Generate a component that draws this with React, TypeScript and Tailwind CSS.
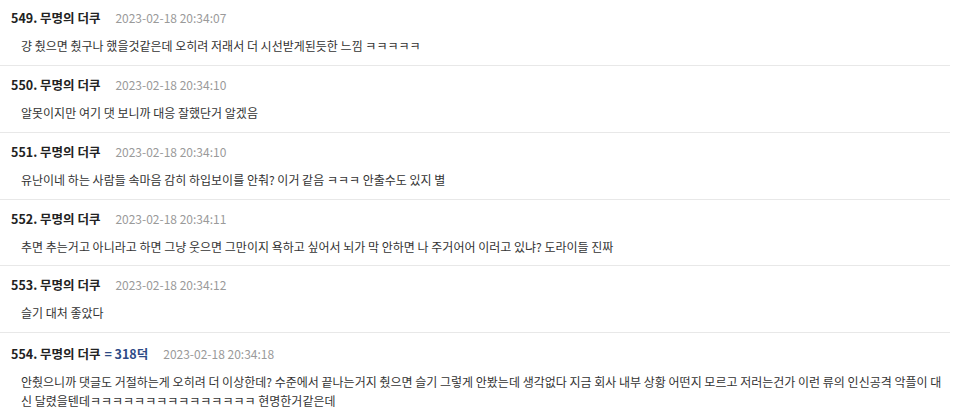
import React from 'react';

interface Comment {
  no: number;
  name: string;
  point?: string;
  date: string;
  body: string;
}

const comments: Comment[] = [
  {
    no: 549,
    name: '무명의 더쿠',
    date: '2023-02-18 20:34:07',
    body: '걍 췄으면 췄구나 했을것같은데 오히려 저래서 더 시선받게된듯한 느낌 ㅋㅋㅋㅋㅋ',
  },
  {
    no: 550,
    name: '무명의 더쿠',
    date: '2023-02-18 20:34:10',
    body: '알못이지만 여기 댓 보니까 대응 잘했단거 알겠음',
  },
  {
    no: 551,
    name: '무명의 더쿠',
    date: '2023-02-18 20:34:10',
    body: '유난이네 하는 사람들 속마음 감히 하입보이를 안춰? 이거 같음 ㅋㅋㅋ 안출수도 있지 별',
  },
  {
    no: 552,
    name: '무명의 더쿠',
    date: '2023-02-18 20:34:11',
    body: '추면 추는거고 아니라고 하면 그냥 웃으면 그만이지 욕하고 싶어서 뇌가 막 안하면 나 주거어어 이러고 있냐? 도라이들 진짜',
  },
  {
    no: 553,
    name: '무명의 더쿠',
    date: '2023-02-18 20:34:12',
    body: '슬기 대처 좋았다',
  },
  {
    no: 554,
    name: '무명의 더쿠',
    point: '= 318덕',
    date: '2023-02-18 20:34:18',
    body: '안췄으니까 댓글도 거절하는게 오히려 더 이상한데? 수준에서 끝나는거지 췄으면 슬기 그렇게 안봤는데 생각없다 지금 회사 내부 상황 어떤지 모르고 저러는건가 이런 류의 인신공격 악플이 대신 달렸을텐데ㅋㅋㅋㅋㅋㅋㅋㅋㅋㅋㅋㅋㅋㅋㅋ 현명한거같은데',
  },
];

export default function App() {
  return (
    <div
      className="w-[960px] h-[418px] overflow-hidden bg-white"
      style={{ fontFamily: '"Noto Sans CJK KR", "Noto Sans", sans-serif' }}
    >
      <ul className="w-[950px]">
        {comments.map((c, i) => (
          <li
            key={c.no}
            className={`${i === 0 ? 'pt-[8px]' : 'border-t border-[#e8e8e8]'} ${
              c.point ? 'pt-[11px]' : i > 0 ? 'pt-[9px]' : ''
            } ${i === 3 ? 'pb-[9px]' : 'pb-[10px]'}`}
          >
            <div className="flex items-center h-5 pl-[11px]">
              <span className="text-[12.5px] font-bold text-[#222]">
                {c.no}. {c.name}
              </span>
              {c.point && (
                <span className="ml-1 text-[12.5px] font-bold text-[#2d4a86]">{c.point}</span>
              )}
              <span className="ml-[15px] text-[12px] text-[#9a9a9a]">{c.date}</span>
            </div>
            <p className="mt-2 pl-[21px] text-[12px] leading-[19px] text-[#333]">{c.body}</p>
          </li>
        ))}
      </ul>
    </div>
  );
}
